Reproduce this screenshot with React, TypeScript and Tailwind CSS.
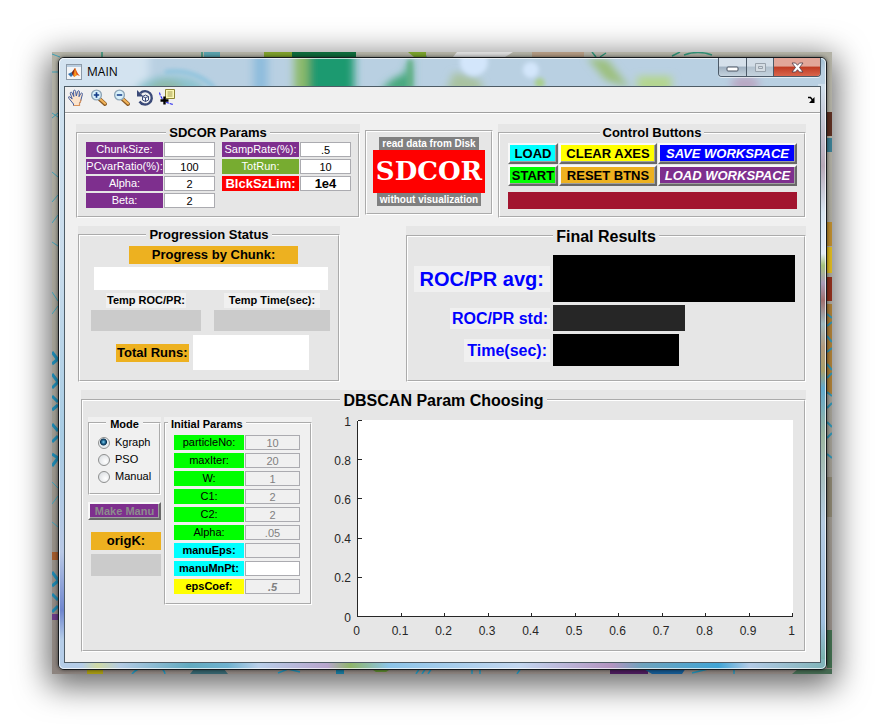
import { useId, type ReactNode } from "react";

type PanelProps = {
  title?: string;
  bg?: string;
  legend?: string;
  body?: string;
  className?: string;
  children: ReactNode;
};

function Panel({ title, bg = "bg-[#e6e6e6]", legend = "mx-auto px-[3px] text-[13px] leading-[17px]", body = "", className = "", children }: PanelProps) {
  return (
    <div className={`min-w-0 ${bg} ${className}`}>
      <fieldset className="h-full min-w-0 border-2 border-white [border-style:groove]">
        {title && <legend className={`font-bold whitespace-nowrap ${legend}`}>{title}</legend>}
        <div className={body}>{children}</div>
      </fieldset>
    </div>
  );
}

type ParamProps = {
  label: string;
  value?: string;
  tone: string;
  field?: string;
  disabled?: boolean;
};

function Param({ label, value = "", tone, field = "bg-white text-[11px] text-black", disabled }: ParamProps) {
  const id = useId();
  return (
    <>
      <label htmlFor={id} className={`h-[15px] text-center leading-[15px] whitespace-nowrap ${tone}`}>
        {label}
      </label>
      <input
        id={id}
        type="text"
        defaultValue={value}
        disabled={disabled}
        className={`h-[15px] w-full min-w-0 border border-[#ababb0] p-0 text-center leading-[13px] ${field}`}
      />
    </>
  );
}

const purple = "bg-[#7e2f8e] text-white text-[11px]";
const green = "bg-[#00ff00] text-black text-[11px]";
const cyan = "bg-[#00ffff] text-black text-[11px] font-bold";
const off = "bg-[#f0f0f0] text-[11px] text-[#808080]";

function PushButton({ children, tone, disabled }: { children: ReactNode; tone: string; disabled?: boolean }) {
  return (
    <button
      type="button"
      disabled={disabled}
      className={`min-w-0 border-2 border-t-[#f8f8f8] border-r-[#696969] border-b-[#696969] border-l-[#f8f8f8] p-0 text-center font-bold whitespace-nowrap shadow-[inset_-1px_-1px_0_#a0a0a0] ${tone}`}
    >
      {children}
    </button>
  );
}

function Wallpaper() {
  return (
    <svg className="absolute inset-0 h-full w-full" viewBox="0 0 780 622" preserveAspectRatio="none" aria-hidden="true">
      <defs>
        <linearGradient id="wall" x1="0" y1="0" x2="0" y2="1">
          <stop offset="0" stopColor="#b3b2a6" />
          <stop offset=".6" stopColor="#9d9a90" />
          <stop offset="1" stopColor="#8d847f" />
        </linearGradient>
      </defs>
      <rect width="780" height="622" fill="url(#wall)" />
      <g fill="none" strokeWidth="1">
        <path d="M0 2l8 3M0 20h6M0 61l6 4M0 66l6-5M0 120l6 5M0 150l6-7M0 171l6-8M0 190l6 4M0 240l6 9M0 262l6-8M0 430l6 6M0 452l6-8M0 470l6 5" stroke="#3f9fb5" />
        <path d="M0 300l6 8M0 312l6-5M0 322l6 8M0 336l6-6M0 344l6 6M0 358l6-5M0 372l6 7M0 390l6-6M0 402l6 4M0 414l6-8M0 520l6 8M0 534l6-5M0 542l6 6M0 560l6-6" stroke="#1f86ad" strokeWidth="3" />
        <path d="M80 622q6-7 14-6M108 616q4 1 5 6M226 621l10-4 12 3M364 622l4-6M370 622l4-6M376 622l4-6M420 616v6M428 616v6M465 622l4-6M580 616q3 2 4 6M682 616v6M640 621l16-4" stroke="#1f8fb5" strokeWidth="1.500" />
        <path d="M620 4l8-4M632 3q14-5 28 0M50 0v5M150 0v5M372 0l2 5M540 0l4 5M548 5l6-4" stroke="#2f8f74" strokeWidth="1.500" />
      </g>
      <path d="M152 0h16v5h-16z" fill="#5aa3ad" />
      <path d="M212 0h40v5h-40z" fill="#7fa02c" />
      <path d="M240 0h64v5h-64z" fill="#0f6b3c" />
      <path d="M356 0h18v5h-12z" fill="#7aa32e" />
      <path d="M405 0h56l-8 5h-52z" fill="#dcdcdc" />
      <path d="M480 0h52v5h-52z" fill="#b39a83" />
      <path d="M775 60h5v24h-5z" fill="#5c2f22" />
      <path d="M775 86h5v14h-5z" fill="#3b7d92" />
      <path d="M775 170h5v24h-5z" fill="#b98a2e" />
      <path d="M775 195h5v26h-5z" fill="#d9b520" />
      <path d="M775 225h5v24h-5z" fill="#8d2f1d" />
      <path d="M775 252h5v90h-5z" fill="#a87b35" />
      <path d="M775 262l5 4M775 274l5-4M775 284l5 6M775 300l5-4M775 312l5 6M775 326l5-5M775 340l5 4M775 356l5-5M775 370l5 5M775 386l5-5M775 402l5 4" stroke="#2f8fae" strokeWidth="2" />
      <path d="M775 425h5v40h-5z" fill="#867f6c" />
      <path d="M775 578h5v38h-5z" fill="#3f6a4c" />
      <path d="M0 500h6v8H0z" fill="#a05a2c" />
      <path d="M0 562h6v6H0z" fill="#6a3a86" />
      <path d="M35 617h16v5H35z" fill="#a79a12" />
      <path d="M138 622l4-5h30l4 5z" fill="#35646e" />
      <path d="M284 616h8v6h-8z" fill="#17779b" />
      <path d="M318 616h22l-6 4h-10z" fill="#5c8a2e" />
      <path d="M558 616h38v6h-38z" fill="#4c1c5c" />
      <path d="M590 616h44l-4 6h-30z" fill="#155a92" />
      <path d="M740 622l6-5h34v5z" fill="#456a52" />
    </svg>
  );
}

function Glass() {
  return (
    <svg className="absolute inset-0 h-full w-full" viewBox="0 0 769 613" preserveAspectRatio="none" aria-hidden="true">
      <defs>
        <filter id="soft" x="-50%" y="-50%" width="200%" height="200%">
          <feGaussianBlur stdDeviation="4" />
        </filter>
        <filter id="softer" x="-50%" y="-50%" width="200%" height="200%">
          <feGaussianBlur stdDeviation="2" />
        </filter>
        <linearGradient id="leftEdge" x1="0" y1="0" x2="0" y2="1">
          <stop offset="0" stopColor="#cfe2f0" />
          <stop offset=".3" stopColor="#c9dcec" />
          <stop offset=".6" stopColor="#a8cce4" />
          <stop offset=".8" stopColor="#b9c9e6" />
          <stop offset=".9" stopColor="#6f86cf" />
          <stop offset=".95" stopColor="#b5cde8" />
          <stop offset="1" stopColor="#b5cde8" />
        </linearGradient>
        <linearGradient id="rightEdge" x1="0" y1="0" x2="0" y2="1">
          <stop offset="0" stopColor="#d0e1ee" />
          <stop offset=".14" stopColor="#b7a9b8" />
          <stop offset=".22" stopColor="#d8e6f2" />
          <stop offset=".29" stopColor="#e4edf7" />
          <stop offset=".31" stopColor="#a6c47c" />
          <stop offset=".34" stopColor="#a99bb8" />
          <stop offset=".37" stopColor="#a07070" />
          <stop offset=".41" stopColor="#9db9bd" />
          <stop offset=".45" stopColor="#b39a7c" />
          <stop offset=".49" stopColor="#a8a06a" />
          <stop offset=".52" stopColor="#5fa9cf" />
          <stop offset=".6" stopColor="#9cb5a0" />
          <stop offset=".75" stopColor="#b4cbe2" />
          <stop offset=".92" stopColor="#9fbfe0" />
          <stop offset="1" stopColor="#6eae9f" />
        </linearGradient>
        <linearGradient id="bottomEdge" x1="0" y1="0" x2="1" y2="0">
          <stop offset="0" stopColor="#b5cde8" />
          <stop offset=".03" stopColor="#b5cde8" />
          <stop offset=".05" stopColor="#cfd9a4" />
          <stop offset=".08" stopColor="#b3cbe4" />
          <stop offset=".17" stopColor="#62aac0" />
          <stop offset=".22" stopColor="#6fb2cf" />
          <stop offset=".26" stopColor="#b9cfe9" />
          <stop offset=".35" stopColor="#b7a5cc" />
          <stop offset=".38" stopColor="#8fb56a" />
          <stop offset=".43" stopColor="#8cc4e8" />
          <stop offset=".6" stopColor="#c3d7f0" />
          <stop offset=".72" stopColor="#b394c0" />
          <stop offset=".76" stopColor="#6fa3bd" />
          <stop offset=".86" stopColor="#41a5d6" />
          <stop offset=".9" stopColor="#b3cbe6" />
          <stop offset="1" stopColor="#7fb3b8" />
        </linearGradient>
      </defs>
      <rect width="769" height="613" fill="#b9d0e2" />
      <rect y="26" width="8" height="587" fill="url(#leftEdge)" />
      <rect x="761" y="26" width="8" height="587" fill="url(#rightEdge)" />
      <rect y="603" width="769" height="10" fill="url(#bottomEdge)" />
      <g filter="url(#soft)">
        <rect x="-10" y="-10" width="100" height="42" fill="#d3e3f0" />
        <ellipse cx="112" cy="32" rx="34" ry="14" fill="#8cc3cf" />
        <ellipse cx="108" cy="34" rx="18" ry="12" fill="#8fb9a8" />
        <rect x="195" y="-5" width="14" height="40" fill="#8cbbdc" />
        <rect x="246" y="-8" width="50" height="44" fill="#1d9a70" />
        <rect x="236" y="-8" width="14" height="44" fill="#8cba6a" />
        <path d="M354-4v38h-30q4-12 22-18z" fill="#4aa97f" />
        <path d="M388 34l8-20 26 8 4 12z" fill="#a9c2a0" />
        <path d="M530 0l18 22 24 8-22-28z" fill="#9cc07e" />
        <rect x="580" y="18" width="34" height="16" fill="#b4d690" />
        <ellipse cx="688" cy="26" rx="14" ry="8" fill="#b9a9c4" />
        <rect x="698" y="-4" width="70" height="12" fill="#9fbdd0" />
      </g>
      <g filter="url(#softer)">
        <circle cx="416" cy="4" r="14" fill="#d3e6fb" />
        <circle cx="473" cy="12" r="8" fill="#d3e6fb" />
        <circle cx="482" cy="25" r="5" fill="#a9cf8c" />
        <path d="M352 2v28" stroke="#5faf7f" strokeWidth="4" />
        <path d="M106 14q30-4 50 16" fill="none" stroke="#7fbfdc" strokeWidth="3" />
      </g>
    </svg>
  );
}

function TitleIcon() {
  return (
    <svg width="16" height="16" viewBox="0 0 16 16" aria-hidden="true">
      <rect x=".5" y=".5" width="15" height="15" fill="#f3f5f7" stroke="#8c9aa8" />
      <path d="M1 1h14v2H1z" fill="#b8cde0" />
      <path d="M2 10l4-2 2 2-3 3z" fill="#2f6fae" />
      <path d="M6 8l3-4 1 4-2 4-2-2z" fill="#7c2a14" />
      <path d="M9 4c1 1 2 5 5 8l-3-1-3 2-1-2z" fill="#e2561b" />
      <path d="M9 4c1 2 0 5 2 7l-3 2z" fill="#f6a21f" />
    </svg>
  );
}

function Magnifier({ plus }: { plus?: boolean }) {
  return (
    <svg width="18" height="18" viewBox="0 0 18 18" aria-hidden="true">
      <path d="M9.500 10l5.500 5" stroke="#8a5a24" strokeWidth="4" strokeLinecap="round" />
      <path d="M10 10l5 4.500" stroke="#f2b45a" strokeWidth="2.200" strokeLinecap="round" />
      <circle cx="6.500" cy="6" r="4.900" fill="#d9f1fb" stroke="#8fa6b8" strokeWidth="1.400" />
      <path d={plus ? "M3.800 6h5.400M6.500 3.300v5.400" : "M3.800 6h5.400"} stroke="#123a86" strokeWidth="1.700" />
    </svg>
  );
}

function HandIcon() {
  return (
    <svg width="18" height="18" viewBox="0 0 18 18" aria-hidden="true">
      <path
        d="M6.500 16.500v-1.500L2 9.500C1 8 1.500 7.300 3 8l2.200 2L3.300 4.500c-.3-1.500 1.300-2 1.900-.5L6.800 7.500 6.500 2.300c0-1.500 1.900-1.500 2.100 0L9.300 7l1.200-4.400c.4-1.400 2.100-1 1.900.4L12 7.700l1.700-3.100c.7-1.200 2.100-.5 1.700.8L13.900 11c-.3 1.500-1 2.600-1.400 3.500v2z"
        fill="#fbe3cc"
        stroke="#3f5a9c"
        strokeWidth="1"
        strokeLinejoin="round"
      />
      <path d="M6.500 16.500h6v-2c.8-1 1.300-2 1.600-4" fill="none" stroke="#d8935c" strokeWidth="1.200" />
    </svg>
  );
}

function RotateIcon() {
  return (
    <svg width="18" height="18" viewBox="0 0 18 18" aria-hidden="true">
      <path d="M4.200 4.200A6.700 6.700 0 1 1 3.500 12.500" fill="none" stroke="#3b4a78" strokeWidth="2.400" />
      <path d="M1 1v6.500h6.500z" fill="#3b4a78" />
      <path d="M6.500 7.500l3-1.500 3 1.500v3.500l-3 1.500-3-1.500zM6.500 7.500l3 1.200 3-1.200M9.500 8.700v3.800" fill="#eef1f8" stroke="#3b4a78" strokeWidth="1" />
    </svg>
  );
}

function DataCursorIcon() {
  return (
    <svg width="18" height="18" viewBox="0 0 18 18" aria-hidden="true">
      <path d="M.5 3.500c1 5 4 10 14 12" fill="none" stroke="#2a2af0" strokeWidth="1.200" strokeDasharray="3 1" />
      <path d="M6.500.5h9v9h-9z" fill="#fbf8b4" stroke="#8c8434" />
      <path d="M8.500 3h5M8.500 5h5M8.500 7h5" stroke="#a39b50" strokeWidth="1" />
      <path d="M5.500 7.500v8M1.500 11.500h8" stroke="#000" strokeWidth="2.400" />
    </svg>
  );
}

function WindowButtons() {
  const base = "flex items-center justify-center border-r border-[#4c5a68]";
  return (
    <div className="-mt-px flex h-[19px] w-[103px] overflow-hidden rounded-b-[4px] border border-t-0 border-[#4c5a68] shadow-[0_1px_0_rgba(255,255,255,.6)]">
      <button type="button" aria-label="Minimize" className={`${base} w-[28px] bg-linear-to-b from-[#d5e0ea] from-45% via-[#9fb0c0] via-50% to-[#c5d3de]`}>
        <svg width="13" height="10" viewBox="0 0 13 10">
          <rect x="1" y="5" width="11" height="4" rx="1" fill="#fff" stroke="#4a5462" />
        </svg>
      </button>
      <button type="button" aria-label="Maximize" disabled className={`${base} w-[27px] bg-linear-to-b from-[#d2dde7] from-45% via-[#b2c1ce] via-50% to-[#c5d3de]`}>
        <svg width="13" height="11" viewBox="0 0 13 11">
          <path d="M1.500 1.500h10v8h-10zM4.500 4.500h4v2h-4z" fill="#d5dde4" stroke="#98a2ac" />
        </svg>
      </button>
      <button type="button" aria-label="Close" className="flex flex-1 items-center justify-center bg-linear-to-b from-[#e2a699] from-45% via-[#bf3a22] via-50% to-[#d9654c]">
        <svg width="13" height="11" viewBox="0 0 13 11">
          <path d="M1 1h3.500l2 2.300L8.500 1H12L8.500 5.500 12 10H8.500l-2-2.300L4.500 10H1l3.500-4.500z" fill="#fff" stroke="#4b3a48" strokeWidth=".8" />
        </svg>
      </button>
    </div>
  );
}

const xTicks = ["0", "0.1", "0.2", "0.3", "0.4", "0.5", "0.6", "0.7", "0.8", "0.9", "1"];
const yTicks = ["0", "0.2", "0.4", "0.6", "0.8", "1"];

function Axes() {
  const left = 45.5;
  const bottom = 206.5;
  const width = 435;
  const height = 196;
  return (
    <svg viewBox="0 0 492 238" className="block w-full" role="img" aria-label="Empty axes">
      <rect x="45" y="10" width="436" height="197" fill="#fff" />
      <g stroke="#262626" strokeWidth="1" shapeRendering="crispEdges">
        <path d={`M${left} ${bottom - height}V${bottom}H${left + width}`} fill="none" />
        {xTicks.map((t, i) => (
          <path key={t} d={`M${left + (i * width) / 10} ${bottom}v-4`} />
        ))}
        {yTicks.map((t, i) => (
          <path key={t} d={`M${left} ${bottom - (i * height) / 5}h4`} />
        ))}
      </g>
      <g fill="#262626" className="text-[12px]">
        {xTicks.map((t, i) => (
          <text key={t} x={left - 1 + (i * width) / 10} y="225" textAnchor="middle">
            {t}
          </text>
        ))}
        {yTicks.map((t, i) => (
          <text key={t} x="39" y={bottom + 5 - (i * height) / 5} textAnchor="end">
            {t}
          </text>
        ))}
      </g>
    </svg>
  );
}

const small = "pt-[2px] text-[11px] leading-[10px]";
const large = "mx-auto px-[3px] pt-[2px] text-[16px] leading-[18px]";

export default function App() {
  return (
    <main className="min-h-screen bg-white pt-[52px] pr-[53px] pb-[53px] pl-[52px] font-['Liberation_Sans',Arial,sans-serif] text-black">
      <div className="relative rounded-[2px] pt-[5px] pr-[5px] pb-[4px] pl-[6px] shadow-[0_8px_32px_4px_rgba(0,0,0,.6)]">
        <Wallpaper />
        <div className="relative overflow-hidden rounded-[6px] border border-[#15191d] shadow-[0_0_4px_rgba(0,0,0,.6)]">
          <Glass />
          <div className="relative rounded-[5px] border border-white/70 px-1 pb-[5px]">
            <header className="flex h-[27px] items-start">
              <div className="flex h-[26px] flex-1 items-center gap-[5px] pl-[2px]">
                <TitleIcon />
                <h1 className="font-['Open_Sans','Noto_Sans',sans-serif] text-[12px] leading-4">MAIN</h1>
              </div>
              <WindowButtons />
            </header>
            <div className="border border-[#4e5c66] bg-[#f0f0f0]">
              <div className="flex h-[27px] items-start border-b border-white shadow-[inset_0_-1px_0_#a0a0a0]" role="toolbar" aria-label="Figure tools">
                <div className="flex flex-1 gap-[5px] pt-[2px] pl-[2px]">
                  <button type="button" aria-label="Pan"><HandIcon /></button>
                  <button type="button" aria-label="Zoom in"><Magnifier plus /></button>
                  <button type="button" aria-label="Zoom out"><Magnifier /></button>
                  <button type="button" aria-label="Rotate"><RotateIcon /></button>
                  <button type="button" aria-label="Data cursor"><DataCursorIcon /></button>
                </div>
                <button type="button" aria-label="Dock figure" className="mt-[9px] mr-[4px]">
                  <svg width="9" height="8" viewBox="0 0 9 8">
                    <path d="M1 1.500h2.500L6 4.500" fill="none" stroke="#000" strokeWidth="1.500" />
                    <path d="M7.500 1v6H2z" fill="#000" />
                  </svg>
                </button>
              </div>

              <div className="flex flex-col gap-2 pt-[10px] pr-[14px] pb-[10px] pl-[11px]">
                <div className="grid grid-cols-[minmax(0,284fr)_minmax(0,128fr)_minmax(0,308fr)] gap-[5px]">
                  <Panel title="SDCOR Params" body="flex gap-[7px] pt-px pr-[7px] pb-2 pl-2">
                    <div className="grid flex-1 grid-cols-[minmax(0,77fr)_minmax(0,51fr)] gap-x-px gap-y-[2px]">
                      <Param label="ChunkSize:" tone={purple} />
                      <Param label="PCvarRatio(%):" value="100" tone={purple} />
                      <Param label="Alpha:" value="2" tone={purple} />
                      <Param label="Beta:" value="2" tone={purple} />
                    </div>
                    <div className="grid flex-1 grid-cols-[minmax(0,77fr)_minmax(0,51fr)] content-start gap-x-px gap-y-[2px]">
                      <Param label="SampRate(%):" value=".5" tone={purple} />
                      <Param label="TotRun:" value="10" tone="bg-[#77ac30] text-white text-[11px]" />
                      <Param label="BlckSzLim:" value="1e4" tone="bg-[#ff0000] text-white text-[13px] font-bold" field="bg-white text-[13px] font-bold text-black" />
                    </div>
                  </Panel>

                  <Panel className="mt-[6px] mb-[3px]" body="flex flex-col items-center pt-[5px] font-bold whitespace-nowrap text-white">
                    <p className="bg-[#808080] px-[3px] text-[10px] leading-[13px]">read data from Disk</p>
                    <p className="bg-[#ff0000] px-[3px] font-['DejaVu_Serif',serif] text-[26px] leading-[43px]">SDCOR</p>
                    <p className="bg-[#808080] px-[3px] text-[10px] leading-[13px]">without visualization</p>
                  </Panel>

                  <Panel title="Control Buttons" body="pt-[2px] pr-[7px] pb-[7px] pl-2">
                    <div className="grid auto-rows-[21px] grid-cols-[minmax(0,50fr)_minmax(0,98fr)_minmax(0,139fr)] gap-px text-[13px] leading-4">
                      <PushButton tone="bg-[#00ffff]">LOAD</PushButton>
                      <PushButton tone="bg-[#ffff00]">CLEAR AXES</PushButton>
                      <PushButton tone="bg-[#0000ff] text-white italic">SAVE WORKSPACE</PushButton>
                      <PushButton tone="bg-[#00ff00]">START</PushButton>
                      <PushButton tone="bg-[#edb120]">RESET BTNS</PushButton>
                      <PushButton tone="bg-[#7e2f8e] text-white italic">LOAD WORKSPACE</PushButton>
                    </div>
                    <div className="mt-[6px] h-[17px] bg-[#a2142f]" role="status" />
                  </Panel>
                </div>

                <div className="grid grid-cols-[minmax(0,262fr)_minmax(0,400fr)] gap-[66px] pl-[2px]">
                  <Panel title="Progression Status" body="pt-[3px] pb-[10px] text-center font-bold">
                    <h2 className="mr-[40px] ml-[49px] bg-[#edb120] text-[13px] leading-[18px]">Progress by Chunk:</h2>
                    <output className="mt-[3px] mr-[10px] ml-[14px] block h-[23px] bg-white" />
                    <div className="mt-[3px] mr-[8px] ml-[11px] grid grid-cols-[minmax(0,110fr)_minmax(0,116fr)] gap-x-[13px] gap-y-[2px] text-[11px] leading-[15px] whitespace-nowrap">
                      <label htmlFor="temp-roc" className="justify-self-center bg-[#f0f0f0] px-px">Temp ROC/PR:</label>
                      <label htmlFor="temp-time" className="justify-self-center bg-[#f0f0f0] px-[5px]">Temp Time(sec):</label>
                      <output id="temp-roc" className="h-[21px] bg-[#cbcbcb]" />
                      <output id="temp-time" className="h-[21px] bg-[#cbcbcb]" />
                    </div>
                    <div className="mt-[4px] flex items-center gap-1 pl-[36px]">
                      <label htmlFor="total-runs" className="bg-[#edb120] px-px text-[13px] leading-[18px] whitespace-nowrap">Total Runs:</label>
                      <output id="total-runs" className="h-[35px] w-[116px] bg-white" />
                    </div>
                  </Panel>

                  <Panel
                    title="Final Results"
                    legend={large}
                    body="grid grid-cols-[minmax(0,142fr)_minmax(0,242fr)] items-center gap-[3px] pt-[9px] pr-[9px] pb-[14px] font-bold whitespace-nowrap text-[#0000ff]"
                  >
                    <label htmlFor="avg" className="justify-self-end bg-[#f0f0f0] px-[6px] text-[20px] leading-[26px]">ROC/PR avg:</label>
                    <output id="avg" className="h-[47px] bg-black" />
                    <label htmlFor="std" className="justify-self-end bg-[#f0f0f0] px-[2px] text-[16px] leading-[21px]">ROC/PR std:</label>
                    <output id="std" className="h-[26px] w-[132px] bg-[#262626]" />
                    <label htmlFor="time" className="justify-self-end bg-[#f0f0f0] px-[3px] text-[16px] leading-[23px]">Time(sec):</label>
                    <output id="time" className="h-[32px] w-[126px] bg-black" />
                  </Panel>
                </div>

                <Panel title="DBSCAN Param Choosing" className="ml-[5px]" legend={large} body="flex items-start pb-[2px] pl-[5px]">
                  <div className="mt-[7px] flex w-[73px] shrink-0 flex-col">
                    <Panel title="Mode" bg="bg-[#f0f0f0]" legend={`mx-auto px-1 ${small}`} body="pt-[5px] pb-2 pl-2">
                      {["Kgraph", "PSO", "Manual"].map((mode) => (
                        <label key={mode} className="flex h-[17px] items-center gap-[5px] text-[11px] leading-[17px]">
                          <input
                            type="radio"
                            name="mode"
                            defaultChecked={mode === "Kgraph"}
                            className="h-3 w-3 appearance-none rounded-full border border-[#8e8f8f] bg-[radial-gradient(circle_at_65%_65%,#fff,#d4d8dc)] checked:bg-[radial-gradient(circle_at_45%_40%,#7fd0ee_0,#1a5f8c_25%,#0c3350_38%,#e6ecf0_48%)]"
                          />
                          {mode}
                        </label>
                      ))}
                    </Panel>
                    <div className="mt-[7px] grid h-[18px] text-[11px] leading-[14px]">
                      <PushButton disabled tone="bg-[#7e2f8e] text-[#8c8c8c]">Make Manu</PushButton>
                    </div>
                    <label htmlFor="orig-k" className="mt-3 ml-[3px] bg-[#edb120] text-center text-[13px] leading-[18px] font-bold">origK:</label>
                    <output id="orig-k" className="mt-1 ml-[3px] h-[22px] bg-[#cbcbcb]" />
                  </div>

                  <Panel
                    title="Initial Params"
                    bg="bg-[#f0f0f0]"
                    className="mt-[7px] ml-[3px] w-[148px] shrink-0"
                    legend={`ml-[2px] px-[3px] ${small}`}
                    body="grid grid-cols-[minmax(0,70fr)_minmax(0,55fr)] gap-x-px gap-y-[3px] pt-[6px] pr-[10px] pb-[9px] pl-2"
                  >
                    <Param label="particleNo:" value="10" tone={green} field={off} disabled />
                    <Param label="maxIter:" value="20" tone={green} field={off} disabled />
                    <Param label="W:" value="1" tone={green} field={off} disabled />
                    <Param label="C1:" value="2" tone={green} field={off} disabled />
                    <Param label="C2:" value="2" tone={green} field={off} disabled />
                    <Param label="Alpha:" value=".05" tone={green} field={off} disabled />
                    <Param label="manuEps:" tone={cyan} field={off} disabled />
                    <Param label="manuMnPt:" tone={cyan} />
                    <Param label="epsCoef:" value=".5" tone="bg-[#ffff00] text-black text-[11px] font-bold" field="bg-[#f0f0f0] text-[11px] font-bold text-[#808080] italic" disabled />
                  </Panel>

                  <div className="min-w-0 flex-1">
                    <Axes />
                  </div>
                </Panel>
              </div>
            </div>
          </div>
        </div>
      </div>
    </main>
  );
}
